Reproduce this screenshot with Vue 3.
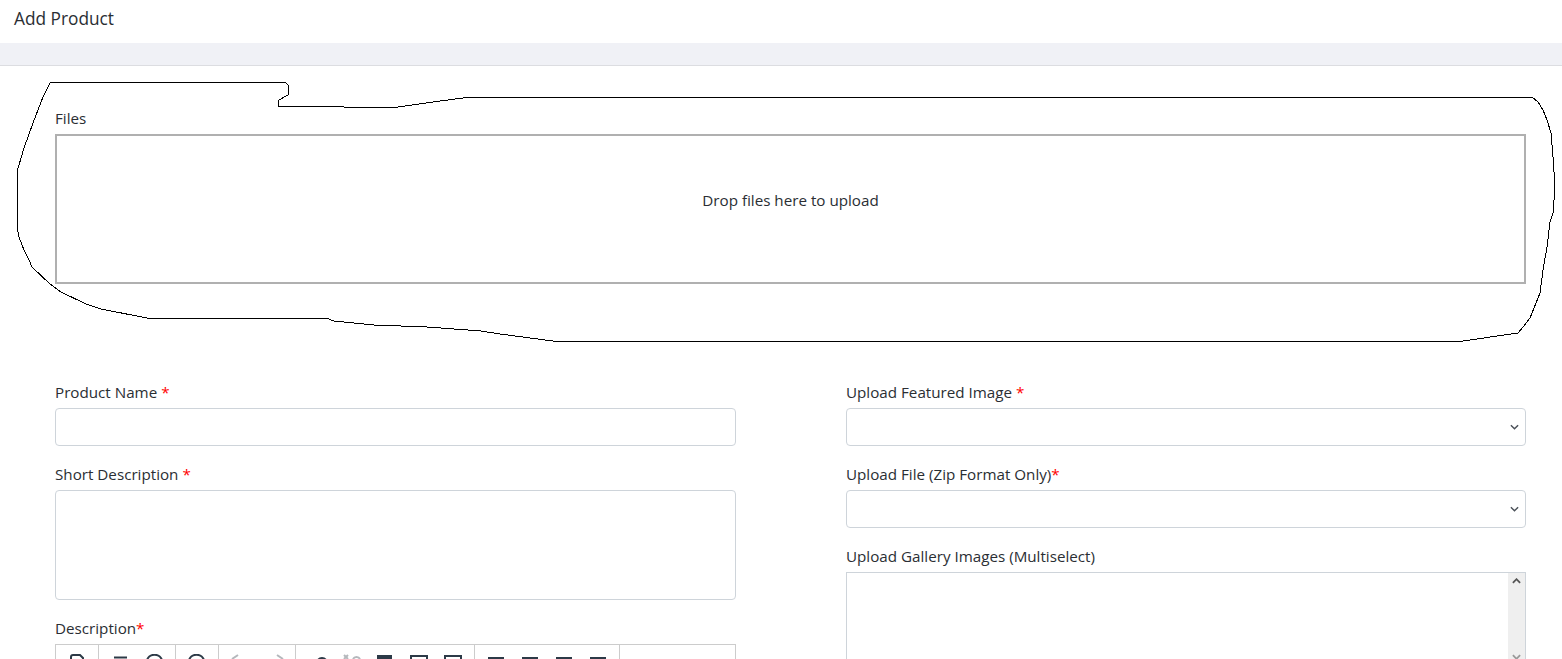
<script setup>
const outline = "M278 106 L279 100 L288 95 L288 85 L285 82 L53 82 L50 83 L43 97 L33 123 L24 148 L21 158 L17 172 L17 227 L19 237 L24 250 L29 260 L32 267 L50 284 L61 292 L86 304 L101 309 L147 318 L326 318 L334 321 L374 325 L427 327 L481 331 L500 334 L553 341 L1463 341 L1518 333 L1523 327 L1530 318 L1540 293 L1543 270 L1547 247 L1550 222 L1553 213 L1555 187 L1553 157 L1551 133 L1547 120 L1543 110 L1538 102 L1532 97 L470 97 L433 102 L398 107 L344 107 Z"

const dark = "#2c3a47"
const ghost = "#b4b8bc"
const bar = { d: "M9 4h16", c: dark }
const groups = [
  { name: "g1", icons: [{ d: "M11 7V3a2 2 0 0 1 2-2h7l3 3v3", c: dark }] },
  { name: "g2", icons: [{ d: "M11 3.5h13", c: dark }, { d: "M10 6a8 8 0 0 1 15 0", c: dark }] },
  { name: "g3", icons: [{ d: "M9 6a8 8 0 0 1 15 0", c: dark }] },
  { name: "g4", icons: [{ d: "M15 1l-6 4", c: ghost }, { d: "M20 1l6 4", c: ghost }] },
  { name: "g5", icons: [
    { d: "M18 6a5 5 0 0 1 8 0", c: dark },
    { d: "M10 1l4 4m0-4l-4 4M19 5a4 4 0 0 1 7 0", c: ghost },
    { d: "M10 2h13v12h-13z", c: dark, fill: true },
    { d: "M9 2h16v12h-16z", c: dark },
    { d: "M9 2h16v12h-16z", c: dark }
  ] },
  { name: "g6", icons: [bar, bar, bar, bar] },
  { name: "g7", icons: [] }
]
</script>

<template>
  <div class="page">
    <header class="title">Add Product</header>
    <div class="strip"></div>
    <main class="content">
      <div class="files">
        <label class="lbl">Files</label>
        <div class="drop"><span>Drop files here to upload</span></div>
      </div>
      <div class="cols">
        <div class="col">
          <div class="field">
            <label class="lbl">Product Name <b>*</b></label>
            <input class="ctl" type="text" />
          </div>
          <div class="field">
            <label class="lbl">Short Description <b>*</b></label>
            <textarea class="ctl area"></textarea>
          </div>
          <div class="field">
            <label class="lbl">Description<b>*</b></label>
            <div class="toolbar">
              <div v-for="g in groups" :key="g.name" class="grp" :class="g.name">
                <svg v-for="(ic, i) in g.icons" :key="i" class="btn" viewBox="0 0 34 16">
                  <path :d="ic.d" :stroke="ic.c" :fill="ic.fill ? ic.c : 'none'" />
                </svg>
              </div>
            </div>
          </div>
        </div>
        <div class="col">
          <div class="field">
            <label class="lbl">Upload Featured Image <b>*</b></label>
            <div class="ctl sel"><svg viewBox="0 0 10 6" class="chev"><path d="M1 1l4 4 4-4" /></svg></div>
          </div>
          <div class="field">
            <label class="lbl">Upload File (Zip Format Only)<b>*</b></label>
            <div class="ctl sel"><svg viewBox="0 0 10 6" class="chev"><path d="M1 1l4 4 4-4" /></svg></div>
          </div>
          <div class="field">
            <label class="lbl">Upload Gallery Images (Multiselect)</label>
            <div class="multi">
              <div class="sb">
                <svg viewBox="0 0 10 6" class="up"><path d="M1 5l4-4 4 4" /></svg>
                <svg viewBox="0 0 10 6" class="down"><path d="M1 1l4 4 4-4" /></svg>
              </div>
            </div>
          </div>
        </div>
      </div>
    </main>
    <svg class="ink" width="1562" height="659" viewBox="0 0 1562 659"><path :d="outline" /></svg>
  </div>
</template>

<style>
html, body { margin: 0; overflow: hidden; background: #fff; }
</style>

<style scoped>
.page {
  position: relative;
  height: 659px;
  overflow: hidden;
  background: #fff;
  color: #2a2e33;
  font-family: "Open Sans", "Noto Sans", sans-serif;
  font-size: 15.2px;
}
.title {
  height: 43px;
  padding: 8px 14px 0;
  box-sizing: border-box;
  font-size: 17.3px;
  line-height: 22px;
}
.strip {
  height: 22px;
  background: #f0f1f6;
  border-bottom: 1px solid #dcdde1;
}
.content { padding: 44px 36px 0 55px; }
.lbl {
  display: block;
  height: 17px;
  line-height: 16px;
  margin-bottom: 7px;
  white-space: nowrap;
}
.lbl b { color: #f00; font-weight: 400; }
.drop {
  height: 150px;
  box-sizing: border-box;
  border: 2px solid #b0b0b0;
  text-align: center;
  padding-top: 55px;
  line-height: 19px;
}
.cols { display: flex; gap: 110px; margin-top: 100px; }
.col { width: 681px; }
.col + .col { width: 680px; }
.field { margin-bottom: 20px; }
.ctl {
  display: block;
  width: 100%;
  height: 38px;
  box-sizing: border-box;
  border: 1px solid #ced4da;
  border-radius: 4px;
  background: #fff;
  margin: 0;
  outline: none;
  resize: none;
  position: relative;
}
.area { height: 110px; }
.chev {
  position: absolute;
  right: 6px;
  top: 15px;
  width: 9px;
  height: 6px;
  fill: none;
  stroke: #4a5058;
  stroke-width: 1.6;
}
.multi {
  height: 200px;
  box-sizing: border-box;
  border: 1px solid #ced4da;
  display: flex;
  justify-content: flex-end;
}
.sb { width: 17px; background: #efefef; position: relative; }
.up, .down {
  position: absolute;
  left: 4px;
  width: 9px;
  height: 6px;
  fill: none;
  stroke: #555;
  stroke-width: 2;
}
.up { top: 5px; }
.down { top: 81px; stroke: #999; }
.toolbar {
  display: flex;
  height: 60px;
  border: 1px solid #ccc;
  border-bottom: 0;
  box-sizing: border-box;
}
.grp {
  box-sizing: border-box;
  height: 100%;
  border-right: 1px solid #ccc;
  display: flex;
  flex: none;
  padding: 9px 4px 0;
}
.g1 { width: 43px; }
.g2 { width: 77px; }
.g3 { width: 43px; }
.g4 { width: 77px; }
.g5 { width: 179px; }
.g6 { width: 145px; }
.g7 { flex: 1; border-right: 0; }
.btn { display: block; width: 34px; height: 16px; flex: none; stroke-width: 2; }
.ink {
  position: absolute;
  left: 0;
  top: 0;
  pointer-events: none;
  fill: none;
  stroke: #000;
  stroke-width: 1;
  shape-rendering: crispEdges;
}
</style>
